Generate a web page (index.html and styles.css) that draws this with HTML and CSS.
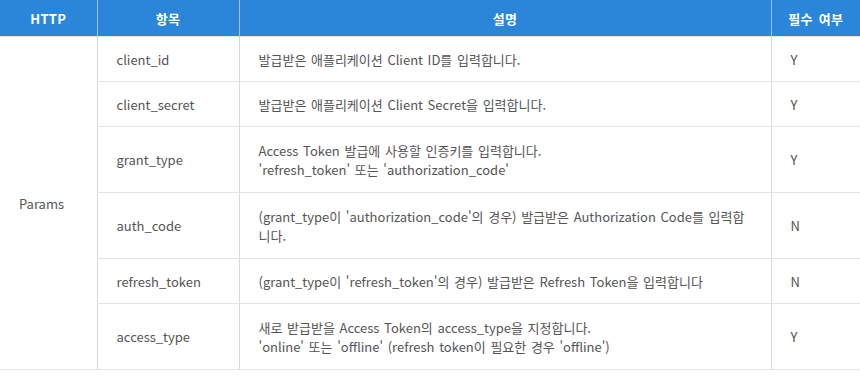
FILE: index.html
```html
<!DOCTYPE html>
<html lang="ko">
<head>
<meta charset="utf-8">
<link rel="stylesheet" href="styles.css">
</head>
<body>
<table class="spec">
  <colgroup>
    <col class="c-http">
    <col class="c-item">
    <col class="c-desc">
    <col class="c-req">
  </colgroup>
  <thead>
    <tr>
      <th>HTTP</th>
      <th>항목</th>
      <th>설명</th>
      <th>필수 여부</th>
    </tr>
  </thead>
  <tbody>
    <tr class="r1">
      <td class="http" rowspan="6">Params</td>
      <td>client_id</td>
      <td class="desc">발급받은 애플리케이션 Client ID를 입력합니다.</td>
      <td>Y</td>
    </tr>
    <tr class="r1">
      <td>client_secret</td>
      <td class="desc">발급받은 애플리케이션 Client Secret을 입력합니다.</td>
      <td>Y</td>
    </tr>
    <tr class="r2">
      <td>grant_type</td>
      <td class="desc">Access Token 발급에 사용할 인증키를 입력합니다.<br>'refresh_token' 또는 'authorization_code'</td>
      <td>Y</td>
    </tr>
    <tr class="r2">
      <td>auth_code</td>
      <td class="desc">(grant_type이 'authorization_code'의 경우) 발급받은 Authorization Code를 입력합<br>니다.</td>
      <td>N</td>
    </tr>
    <tr class="r1">
      <td>refresh_token</td>
      <td class="desc">(grant_type이 'refresh_token'의 경우) 발급받은 Refresh Token을 입력합니다</td>
      <td>N</td>
    </tr>
    <tr class="r2">
      <td>access_type</td>
      <td class="desc">새로 받급받을 Access Token의 access_type을 지정합니다.<br>'online' 또는 'offline' (refresh token이 필요한 경우 'offline')</td>
      <td>Y</td>
    </tr>
  </tbody>
</table>
</body>
</html>
```

FILE: styles.css
```css
html, body {
  margin: 0;
  padding: 0;
  background: #ffffff;
}

body {
  font-family: "Noto Sans CJK KR", "Noto Sans", sans-serif;
  font-size: 13px;
  color: #555555;
}

.spec {
  width: 860px;
  border-collapse: collapse;
  table-layout: fixed;
}

.c-http { width: 97px; }
.c-item { width: 142px; }
.c-desc { width: 532px; }
.c-req { width: 89px; }

.spec th {
  height: 36px;
  padding: 0;
  background: #2b86da;
  color: #ffffff;
  font-weight: bold;
  font-size: 13px;
  letter-spacing: 0.3px;
  word-spacing: 2px;
  text-align: center;
  border-left: 1px solid #9cc6ee;
}

.spec th:first-child {
  border-left: none;
}

.spec td {
  padding: 0 18px 0 19px;
  line-height: 19px;
  text-align: left;
  vertical-align: middle;
  border-top: 1px solid #e4e4e4;
  border-bottom: 1px solid #e4e4e4;
  border-left: 1px solid #d8d8d8;
}

.spec td.desc {
  white-space: nowrap;
  word-spacing: 1px;
}

.spec td.http {
  border-left: none;
  padding-left: 19px;
}

.r1 td {
  height: 44px;
}

.r2 td {
  height: 65px;
}
```
